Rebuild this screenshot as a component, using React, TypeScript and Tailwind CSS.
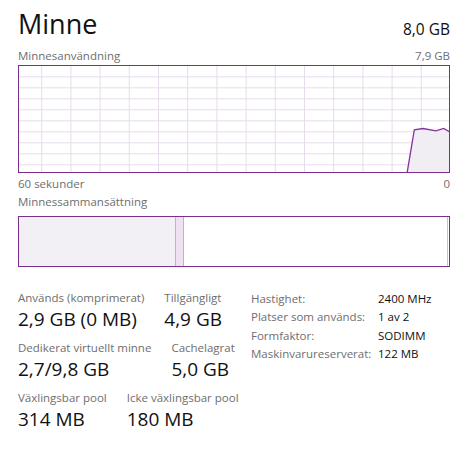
import React from "react";

const gridX = Array.from({ length: 14 }, (_, k) => 22.7 + 29.2 * k);
const gridY = Array.from({ length: 9 }, (_, k) => 10.8 + 11 * k);
const pts: [number, number][] = [
  [388, 107.5],
  [395.3, 63.8],
  [404, 62.5],
  [417, 64.8],
  [424.7, 62.5],
  [432, 66.5],
];

function Stat({ label, value }: { label: string; value: string }) {
  return (
    <div className="flex flex-col">
      <div className="text-[11.5px] leading-[16px] text-[#6e6e6e] whitespace-nowrap">{label}</div>
      <div className="text-[19px] leading-[26px] text-[#111] whitespace-nowrap">{value}</div>
    </div>
  );
}

export default function App() {
  const line = pts.map((p) => p.join(",")).join(" ");
  const area = `${line} 432,108 388,108`;
  return (
    <div
      className="w-[469px] h-[456px] bg-white pl-[18px] pr-[19px] pt-[6px]"
      style={{ fontFamily: '"Open Sans", "Noto Sans", sans-serif' }}
    >
      <div className="flex items-end justify-between h-[36px]">
        <div className="text-[27px] leading-[36px] text-[#111]">Minne</div>
        <div className="text-[15.5px] leading-[22px] text-[#111] mb-[2px]">8,0 GB</div>
      </div>
      <div className="flex justify-between text-[11.5px] leading-[16px] text-[#6e6e6e] mt-[6px]">
        <span>Minnesanvändning</span>
        <span>7,9 GB</span>
      </div>
      <div className="h-[108px] border border-[#7b2f8c] mt-[1px]">
        <svg width="100%" height="100%" viewBox="0 0 430 106" preserveAspectRatio="none">
          {gridX.map((x) => (
            <line key={"x" + x} x1={x} x2={x} y1={0} y2={106} stroke="#e7dcea" strokeWidth={1} />
          ))}
          {gridY.map((y) => (
            <line key={"y" + y} x1={0} x2={430} y1={y} y2={y} stroke="#e7dcea" strokeWidth={1} />
          ))}
          <polygon points={area} fill="#f1eef3" />
          <polyline points={line} fill="none" stroke="#8a2fa0" strokeWidth={1.3} />
        </svg>
      </div>
      <div className="flex justify-between text-[11.5px] leading-[16px] text-[#6e6e6e] mt-[3px]">
        <span>60 sekunder</span>
        <span>0</span>
      </div>
      <div className="text-[11.5px] leading-[16px] text-[#6e6e6e] mt-[2px]">Minnessammansättning</div>
      <div className="h-[51px] border border-[#7b2f8c] mt-[6px] flex">
        <div className="w-[157px] bg-[#f2f0f4] border-r border-[#c4b0cc]" />
        <div className="w-[8px] bg-[#efe0f2] border-r border-[#c4b0cc]" />
        <div className="flex-1" />
        <div className="w-[1px] bg-[#c8c0cc] mr-[1px]" />
      </div>
      <div className="flex mt-[23px]">
        <div className="w-[233px] flex flex-col gap-[8px]">
          <div className="flex gap-[20px]">
            <Stat label="Används (komprimerat)" value="2,9 GB (0 MB)" />
            <Stat label="Tillgängligt" value="4,9 GB" />
          </div>
          <div className="flex gap-[20px]">
            <Stat label="Dedikerat virtuellt minne" value="2,7/9,8 GB" />
            <Stat label="Cachelagrat" value="5,0 GB" />
          </div>
          <div className="flex gap-[20px]">
            <Stat label="Växlingsbar pool" value="314 MB" />
            <Stat label="Icke växlingsbar pool" value="180 MB" />
          </div>
        </div>
        <div className="grid grid-cols-[127px_auto] text-[11.5px] leading-[18.3px] content-start">
          <span className="text-[#6e6e6e]">Hastighet:</span>
          <span className="text-[#111]">2400 MHz</span>
          <span className="text-[#6e6e6e]">Platser som används:</span>
          <span className="text-[#111]">1 av 2</span>
          <span className="text-[#6e6e6e]">Formfaktor:</span>
          <span className="text-[#111]">SODIMM</span>
          <span className="text-[#6e6e6e]">Maskinvarureserverat:</span>
          <span className="text-[#111]">122 MB</span>
        </div>
      </div>
    </div>
  );
}
